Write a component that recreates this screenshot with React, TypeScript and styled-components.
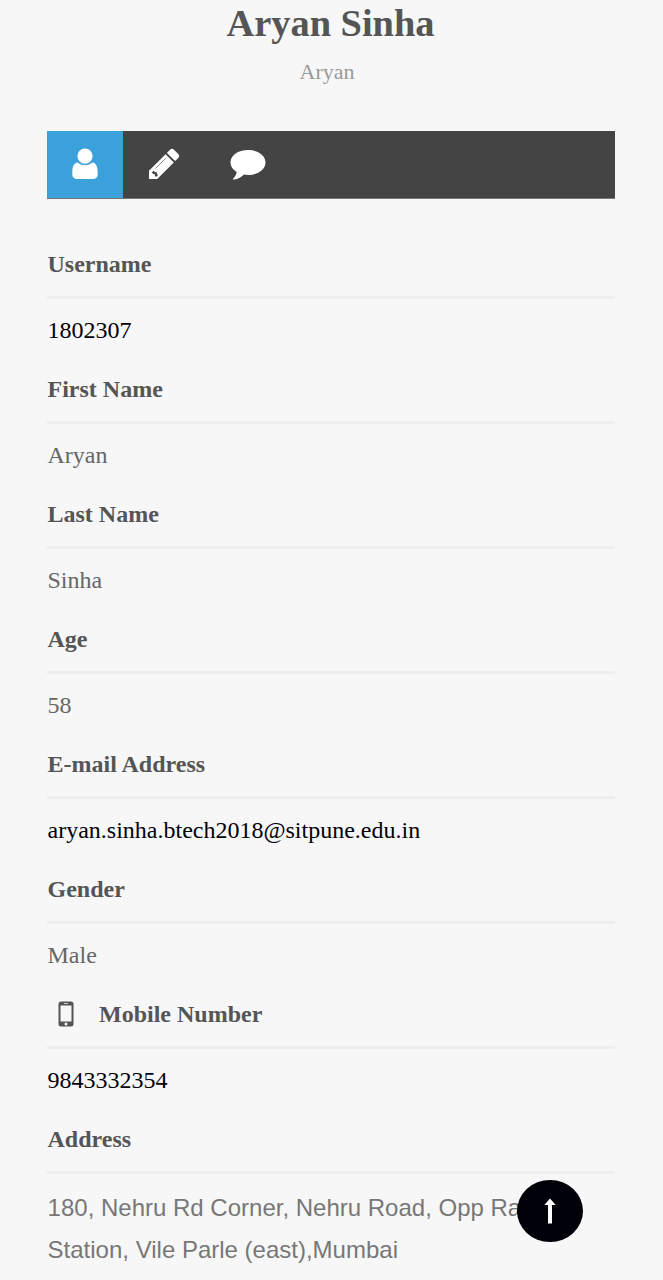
import React from "react";
import styled, { createGlobalStyle } from "styled-components";

const GlobalStyle = createGlobalStyle`
  * { box-sizing: border-box; }
  html, body { margin: 0; background: #f7f7f7; }
  body {
    height: 1280px;
    overflow: hidden;
    font-family: "Liberation Serif", "Times New Roman", serif;
    color: #666;
  }
`;

const Page = styled.main`
  position: relative;
  width: 663px;
  height: 1280px;
  padding: 0 48px 0 47px;
  overflow: hidden;
  background: #f7f7f7;
`;

const Header = styled.header`
  height: 131px;
  text-align: center;
`;

const Title = styled.h1`
  margin: 0 1px 0 0;
  font-size: 38.4px;
  line-height: 46px;
  color: #555;
`;

const Subtitle = styled.p`
  margin: 11px 8px 0 0;
  font-size: 22px;
  line-height: 30px;
  color: #999;
`;

const TabBar = styled.nav`
  display: flex;
  height: 68px;
  border-bottom: 1px solid #777;
  background: #444;
  background-clip: padding-box;
`;

const Tab = styled.button<{ $active?: boolean; $width: number }>`
  display: flex;
  align-items: center;
  justify-content: center;
  width: ${(p) => p.$width}px;
  height: 67px;
  padding: 0 0 1px;
  border: 0;
  background: ${(p) => (p.$active ? "#3ba1da" : "transparent")};
  color: #fff;
`;

const Fields = styled.dl`
  margin: 41px 0 0;
`;

const Field = styled.div`
  height: 125px;
`;

const Label = styled.dt`
  display: flex;
  align-items: center;
  height: 59px;
  padding: 0 0 8px 0.5px;
  border-bottom: 3px solid #eee;
  font-size: 24px;
  font-weight: bold;
  line-height: 48px;
  color: #555;
`;

const LabelIcon = styled.span`
  display: flex;
  width: 51.5px;
  padding-left: 10.5px;
`;

const Value = styled.dd<{ $link?: boolean }>`
  margin: 0;
  padding-left: 0.5px;
  font-size: 24px;
  line-height: 62px;
  color: ${(p) => (p.$link ? "#000008" : "#666")};
`;

const AddressText = styled.dd`
  margin: 0;
  padding: 13px 0 0 0.6px;
  font-family: "Liberation Sans", Arial, sans-serif;
  font-size: 24px;
  line-height: 42px;
  white-space: nowrap;
  color: #777;
`;

const ScrollTop = styled.button`
  position: absolute;
  left: 517px;
  top: 1180px;
  display: flex;
  align-items: center;
  justify-content: center;
  width: 66px;
  height: 62px;
  padding: 0;
  border: 0;
  border-radius: 50%;
  background: #000008;
`;

const UserIcon = () => (
  <svg width="26" height="32" viewBox="0 0 26 32" fill="#fff">
    <path d="M5.500 14.500C2 15 .3 18.500 .3 24.500v2.300C.3 29.500 2.300 31 5 31h16c2.700 0 4.700-1.500 4.700-4.200v-2.300c0-6-1.700-9.500-5.200-10-2 1.700-4.600 2.600-7.500 2.600s-5.500-.9-7.500-2.600z" />
    <circle cx="13" cy="8.200" r="8.300" fill="#3ba1da" />
    <circle cx="13" cy="8.200" r="7.600" />
  </svg>
);

const PencilIcon = () => (
  <svg width="32" height="32" viewBox="0 0 32 32">
    <path fill="#fff" d="M1 22.800 17.600 6.200l8.200 8.200L9.200 31H1zM18.900 4.900l3.400-3.400Q24 0 25.700 1.500l4.800 4.800Q32 8 30.500 9.700l-3.400 3.400z" />
    <path fill="#444" d="m3.800 24.600 1.700-1.800 1.500 1.300 1.800.1.200 1.800 1 1-1.800 1.900-1.400-1.200.3-1.500-1.500.1z" />
    <path d="M7.500 20.500 17.800 10.200" stroke="#444" strokeOpacity=".8" strokeWidth=".8" />
  </svg>
);

const CommentIcon = () => (
  <svg width="36" height="32" viewBox="0 0 36 32" fill="#fff">
    <path d="M18 2C8.200 2 .5 7.300 .5 14.500c0 4 2.400 7.200 6.200 9.500-.3 2.400-1.500 4.500-3.300 6.300-.7.800-.2 1.500.7 1.300 4-.5 7.500-2.300 9.800-5 1.400.3 2.700.4 4.100.4 9.700 0 17.500-5.300 17.500-12.500S27.700 2 18 2z" />
  </svg>
);

const PhoneIcon = () => (
  <svg width="16" height="26" viewBox="0 0 16 26">
    <path fill="#555" fillRule="evenodd" d="M3 .5h10A2.500 2.500 0 0 1 15.500 3v20a2.500 2.500 0 0 1-2.500 2.500H3A2.500 2.500 0 0 1 .5 23V3A2.500 2.500 0 0 1 3 .5zM2.500 4.500v16h11v-16zM6 2.200v.8h4v-.8zM8 21.600a1.500 1.500 0 1 0 0 3 1.500 1.500 0 0 0 0-3z" />
  </svg>
);

const ArrowUpIcon = () => (
  <svg width="12" height="26" viewBox="0 0 12 26" fill="#fff">
    <path d="M6 .5 11.700 7H8v18.500H4V7H.3z" />
  </svg>
);

const fields: { label: string; value: string; link?: boolean; icon?: boolean }[] = [
  { label: "Username", value: "1802307", link: true },
  { label: "First Name", value: "Aryan" },
  { label: "Last Name", value: "Sinha" },
  { label: "Age", value: "58" },
  { label: "E-mail Address", value: "aryan.sinha.btech2018@sitpune.edu.in", link: true },
  { label: "Gender", value: "Male" },
  { label: "Mobile Number", value: "9843332354", link: true, icon: true },
];

export default function App() {
  return (
    <Page>
      <GlobalStyle />
      <Header>
        <Title>Aryan Sinha</Title>
        <Subtitle>Aryan</Subtitle>
      </Header>
      <TabBar>
        <Tab $active $width={76} aria-label="Profile"><UserIcon /></Tab>
        <Tab $width={82} aria-label="Edit"><PencilIcon /></Tab>
        <Tab $width={86} aria-label="Messages"><CommentIcon /></Tab>
      </TabBar>
      <Fields>
        {fields.map((f) => (
          <Field key={f.label}>
            <Label>
              {f.icon && <LabelIcon><PhoneIcon /></LabelIcon>}
              {f.label}
            </Label>
            <Value $link={f.link}>{f.value}</Value>
          </Field>
        ))}
        <Field>
          <Label>Address</Label>
          <AddressText>
            180, Nehru Rd Corner, Nehru Road, Opp Ra
            <br />
            Station, Vile Parle (east),Mumbai
          </AddressText>
        </Field>
      </Fields>
      <ScrollTop aria-label="Back to top"><ArrowUpIcon /></ScrollTop>
    </Page>
  );
}
